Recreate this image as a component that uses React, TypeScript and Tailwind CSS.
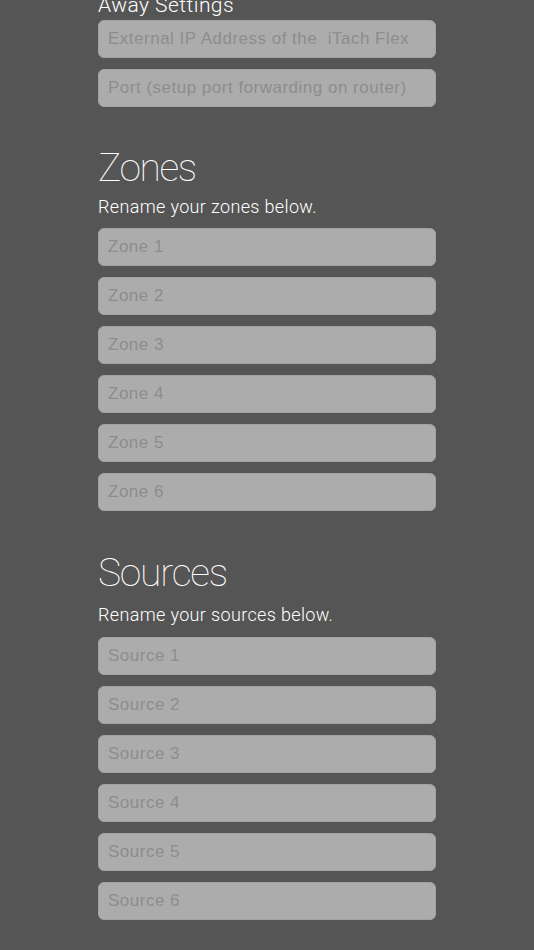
import React from "react";

const zones = ["Zone 1", "Zone 2", "Zone 3", "Zone 4", "Zone 5", "Zone 6"];
const sources = ["Source 1", "Source 2", "Source 3", "Source 4", "Source 5", "Source 6"];

function Field({ placeholder }: { placeholder: string }) {
    return (
        <input
            type="text"
            placeholder={placeholder}
            className="block w-full h-[38px] px-[9px] rounded-[6px] bg-[#acacac] border border-[#a2a2a2] text-[17px] tracking-[0.5px] text-[#333] placeholder:text-[#8d8d8d] outline-none font-['Liberation_Sans',sans-serif]"
        />
    );
}

export default function App() {
    return (
        <div className="min-h-[950px] bg-[#555555] overflow-hidden">
            <div className="w-[338px] mx-auto pb-[30px]">
                {/* away settings */}
                <p className="mt-[-5px] text-[21px] leading-none tracking-[0.45px] font-light text-white font-['Roboto',sans-serif]">Away Settings</p>
                <div className="mt-[4px] flex flex-col gap-[11px]">
                    <Field placeholder="External IP Address of the  iTach Flex" />
                    <Field placeholder="Port (setup port forwarding on router)" />
                </div>

                {/* zones */}
                <h2 className="mt-[42px] text-[39px] leading-none tracking-[-1.4px] font-thin text-white font-['Roboto',sans-serif]">Zones</h2>
                <p className="mt-[10px] text-[18px] leading-none tracking-[0.35px] font-light text-white font-['Roboto',sans-serif]">Rename your zones below.</p>
                <div className="mt-[12px] flex flex-col gap-[11px]">
                    {zones.map((z) => (
                        <Field key={z} placeholder={z} />
                    ))}
                </div>

                {/* sources */}
                <h2 className="mt-[43px] text-[39px] leading-none tracking-[-1.2px] font-thin text-white font-['Roboto',sans-serif]">Sources</h2>
                <p className="mt-[13px] text-[18px] leading-none tracking-[0.35px] font-light text-white font-['Roboto',sans-serif]">Rename your sources below.</p>
                <div className="mt-[13px] flex flex-col gap-[11px]">
                    {sources.map((s) => (
                        <Field key={s} placeholder={s} />
                    ))}
                </div>
            </div>
        </div>
    );
}
